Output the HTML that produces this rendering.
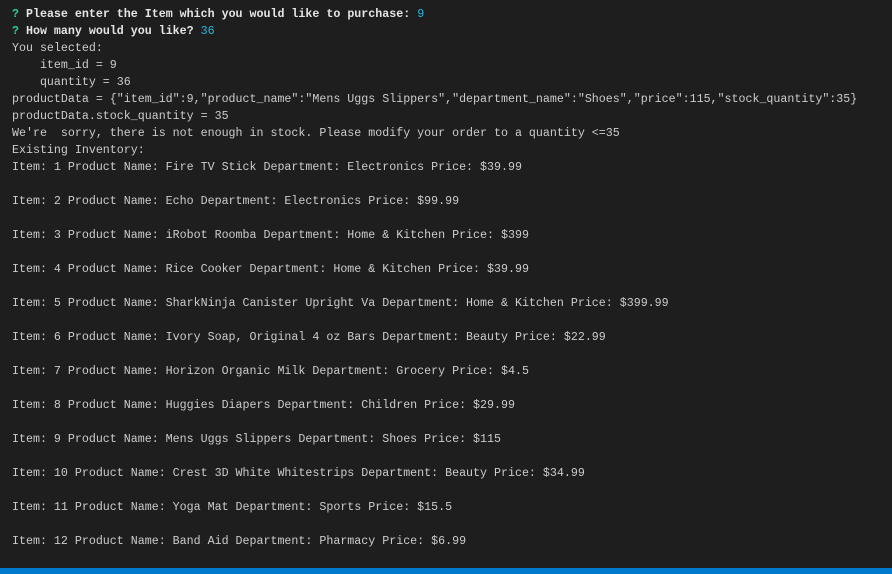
<!DOCTYPE html><html><head><style>
body{margin:0;background:#1e1e1e;width:892px;height:574px;overflow:hidden;position:relative}
pre{margin:0;position:absolute;left:12px;top:6px;font-family:"Liberation Mono",monospace;font-size:11.65px;line-height:17px;color:#cccccc}
.b{font-weight:bold;color:#e5e5e5}.g{color:#23d18b}.c{color:#29b8db;font-weight:normal}
.bar{position:absolute;left:0;right:0;top:568px;height:6px;background:#007acc}
</style></head><body><pre><span class="b"><span class="g">?</span> Please enter the Item which you would like to purchase: <span class="c">9</span></span>
<span class="b"><span class="g">?</span> How many would you like? <span class="c">36</span></span>
You selected:
    item_id = 9
    quantity = 36
productData = {"item_id":9,"product_name":"Mens Uggs Slippers","department_name":"Shoes","price":115,"stock_quantity":35}
productData.stock_quantity = 35
We're  sorry, there is not enough in stock. Please modify your order to a quantity &lt;=35
Existing Inventory:
Item: 1 Product Name: Fire TV Stick Department: Electronics Price: $39.99

Item: 2 Product Name: Echo Department: Electronics Price: $99.99

Item: 3 Product Name: iRobot Roomba Department: Home &amp; Kitchen Price: $399

Item: 4 Product Name: Rice Cooker Department: Home &amp; Kitchen Price: $39.99

Item: 5 Product Name: SharkNinja Canister Upright Va Department: Home &amp; Kitchen Price: $399.99

Item: 6 Product Name: Ivory Soap, Original 4 oz Bars Department: Beauty Price: $22.99

Item: 7 Product Name: Horizon Organic Milk Department: Grocery Price: $4.5

Item: 8 Product Name: Huggies Diapers Department: Children Price: $29.99

Item: 9 Product Name: Mens Uggs Slippers Department: Shoes Price: $115

Item: 10 Product Name: Crest 3D White Whitestrips Department: Beauty Price: $34.99

Item: 11 Product Name: Yoga Mat Department: Sports Price: $15.5

Item: 12 Product Name: Band Aid Department: Pharmacy Price: $6.99</pre><div class="bar"></div></body></html>
